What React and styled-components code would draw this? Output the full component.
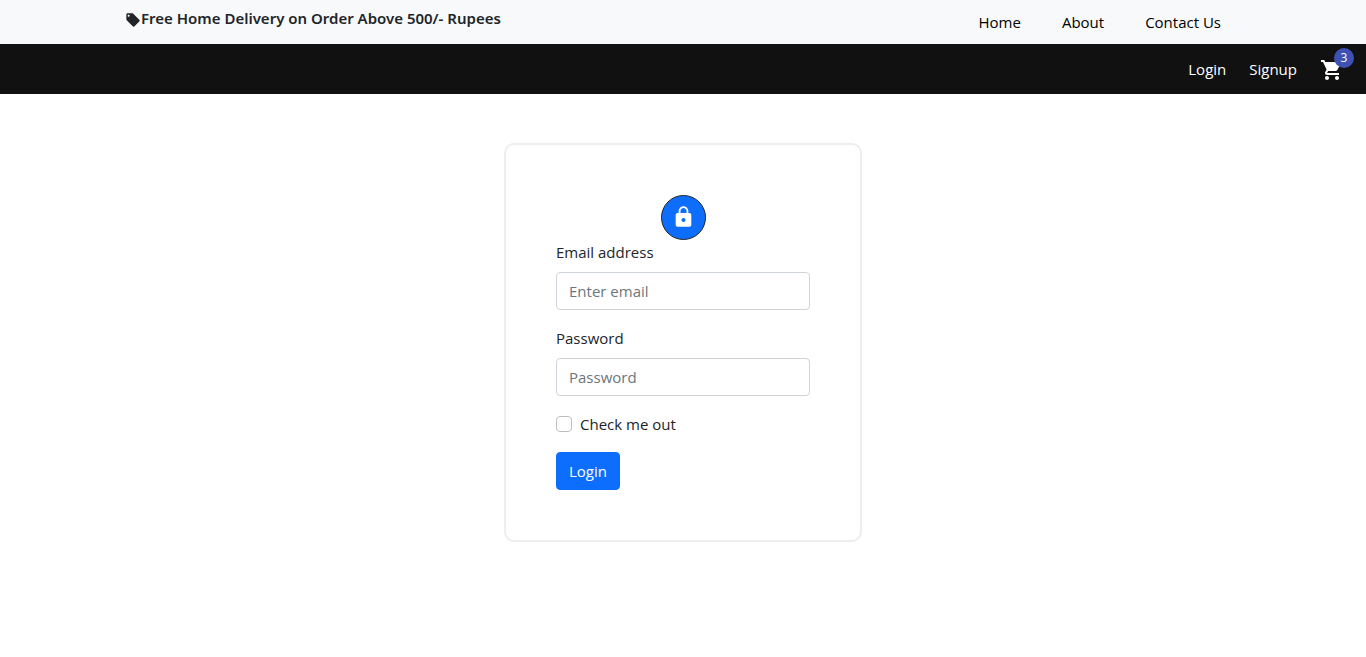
import React from "react";
import styled, { createGlobalStyle } from "styled-components";
import { MdLocalOffer, MdShoppingCart } from "react-icons/md";
import { IoMdLock } from "react-icons/io";

const GlobalStyle = createGlobalStyle`
  *, *::before, *::after { box-sizing: border-box; }
  body {
    margin: 0;
    background: #fff;
    color: #212529;
    font-family: "Segoe UI", "Open Sans", sans-serif;
    font-size: 15px;
    line-height: 24px;
  }
`;

const TopBar = styled.header`
  display: flex;
  justify-content: space-between;
  align-items: flex-start;
  min-height: 44px;
  padding: 0 125px;
  background: #f8f9fa;
`;

const Promo = styled.p`
  display: flex;
  align-items: center;
  margin: 0;
  padding-top: 6px;
  font-family: "Segoe UI", "Noto Sans", sans-serif;
  font-weight: 600;

  svg { margin-top: 4px; }
`;

const TopNav = styled.nav`
  display: flex;
  gap: 41px;
  padding: 10px 20px 0 0;
`;

const TopLink = styled.a`
  color: #000;
  text-decoration: none;
`;

const MainBar = styled.nav`
  display: flex;
  justify-content: flex-end;
  align-items: center;
  gap: 23px;
  min-height: 50px;
  padding: 0 22px;
  background: #111;
`;

const MainLink = styled.a`
  color: #fff;
  text-decoration: none;
`;

const CartLink = styled.a`
  position: relative;
  display: flex;
  padding-top: 2px;
  color: #fff;
`;

const CartBadge = styled.span`
  position: absolute;
  top: -8px;
  right: -10px;
  width: 20px;
  height: 20px;
  border-radius: 50%;
  background: #3f51b5;
  font-size: 12px;
  font-weight: 500;
  line-height: 20px;
  text-align: center;
`;

const LoginCard = styled.form`
  display: flex;
  flex-direction: column;
  align-items: flex-start;
  width: 358px;
  max-width: 100%;
  margin: 49px auto;
  padding: 50px;
  border: 2px solid #eee;
  border-radius: 10px;
`;

const LockMark = styled.div`
  display: flex;
  align-items: center;
  justify-content: center;
  align-self: center;
  width: 45px;
  height: 45px;
  padding-bottom: 2px;
  border: 1px solid #212529;
  border-radius: 50%;
  background: #0d6efd;
  color: #fff;
`;

const Field = styled.div`
  display: flex;
  flex-direction: column;
  gap: 8px;
  width: 100%;
  margin-bottom: 16px;
`;

const TextInput = styled.input`
  width: 100%;
  height: 38px;
  padding: 6px 12px;
  border: 1px solid #ced4da;
  border-radius: 4px;
  background: #fff;
  color: #212529;
  font: inherit;

  &::placeholder { color: #6c757d; opacity: 1; }
`;

const CheckRow = styled.label`
  display: flex;
  align-items: center;
  gap: 8px;
  margin-bottom: 16px;
`;

const CheckBox = styled.input`
  appearance: none;
  width: 16px;
  height: 16px;
  margin: 0;
  border: 1px solid #bfbfbf;
  border-radius: 4px;
  background: #fff;

  &:checked { border-color: #0d6efd; background: #0d6efd; }
`;

const SubmitButton = styled.button`
  height: 38px;
  padding: 6px 12px;
  border: 1px solid #0d6efd;
  border-radius: 4px;
  background: #0d6efd;
  color: #fff;
  font: inherit;
  cursor: pointer;
`;

export default function App() {
  return (
    <>
      <GlobalStyle />
      <TopBar>
        <Promo>
          <MdLocalOffer size={16} aria-hidden="true" />
          Free Home Delivery on Order Above 500/- Rupees
        </Promo>
        <TopNav aria-label="Site">
          <TopLink href="#home">Home</TopLink>
          <TopLink href="#about">About</TopLink>
          <TopLink href="#contact">Contact Us</TopLink>
        </TopNav>
      </TopBar>
      <MainBar aria-label="Account">
        <MainLink href="#login">Login</MainLink>
        <MainLink href="#signup">Signup</MainLink>
        <CartLink href="#cart" aria-label="Cart, 3 items">
          <MdShoppingCart size={24} aria-hidden="true" />
          <CartBadge>3</CartBadge>
        </CartLink>
      </MainBar>
      <main>
        <LoginCard>
          <LockMark>
            <IoMdLock size={25} aria-hidden="true" />
          </LockMark>
          <Field>
            <label htmlFor="email">Email address</label>
            <TextInput id="email" type="email" placeholder="Enter email" />
          </Field>
          <Field>
            <label htmlFor="password">Password</label>
            <TextInput id="password" type="password" placeholder="Password" />
          </Field>
          <CheckRow htmlFor="remember">
            <CheckBox id="remember" type="checkbox" />
            Check me out
          </CheckRow>
          <SubmitButton type="button">Login</SubmitButton>
        </LoginCard>
      </main>
    </>
  );
}
